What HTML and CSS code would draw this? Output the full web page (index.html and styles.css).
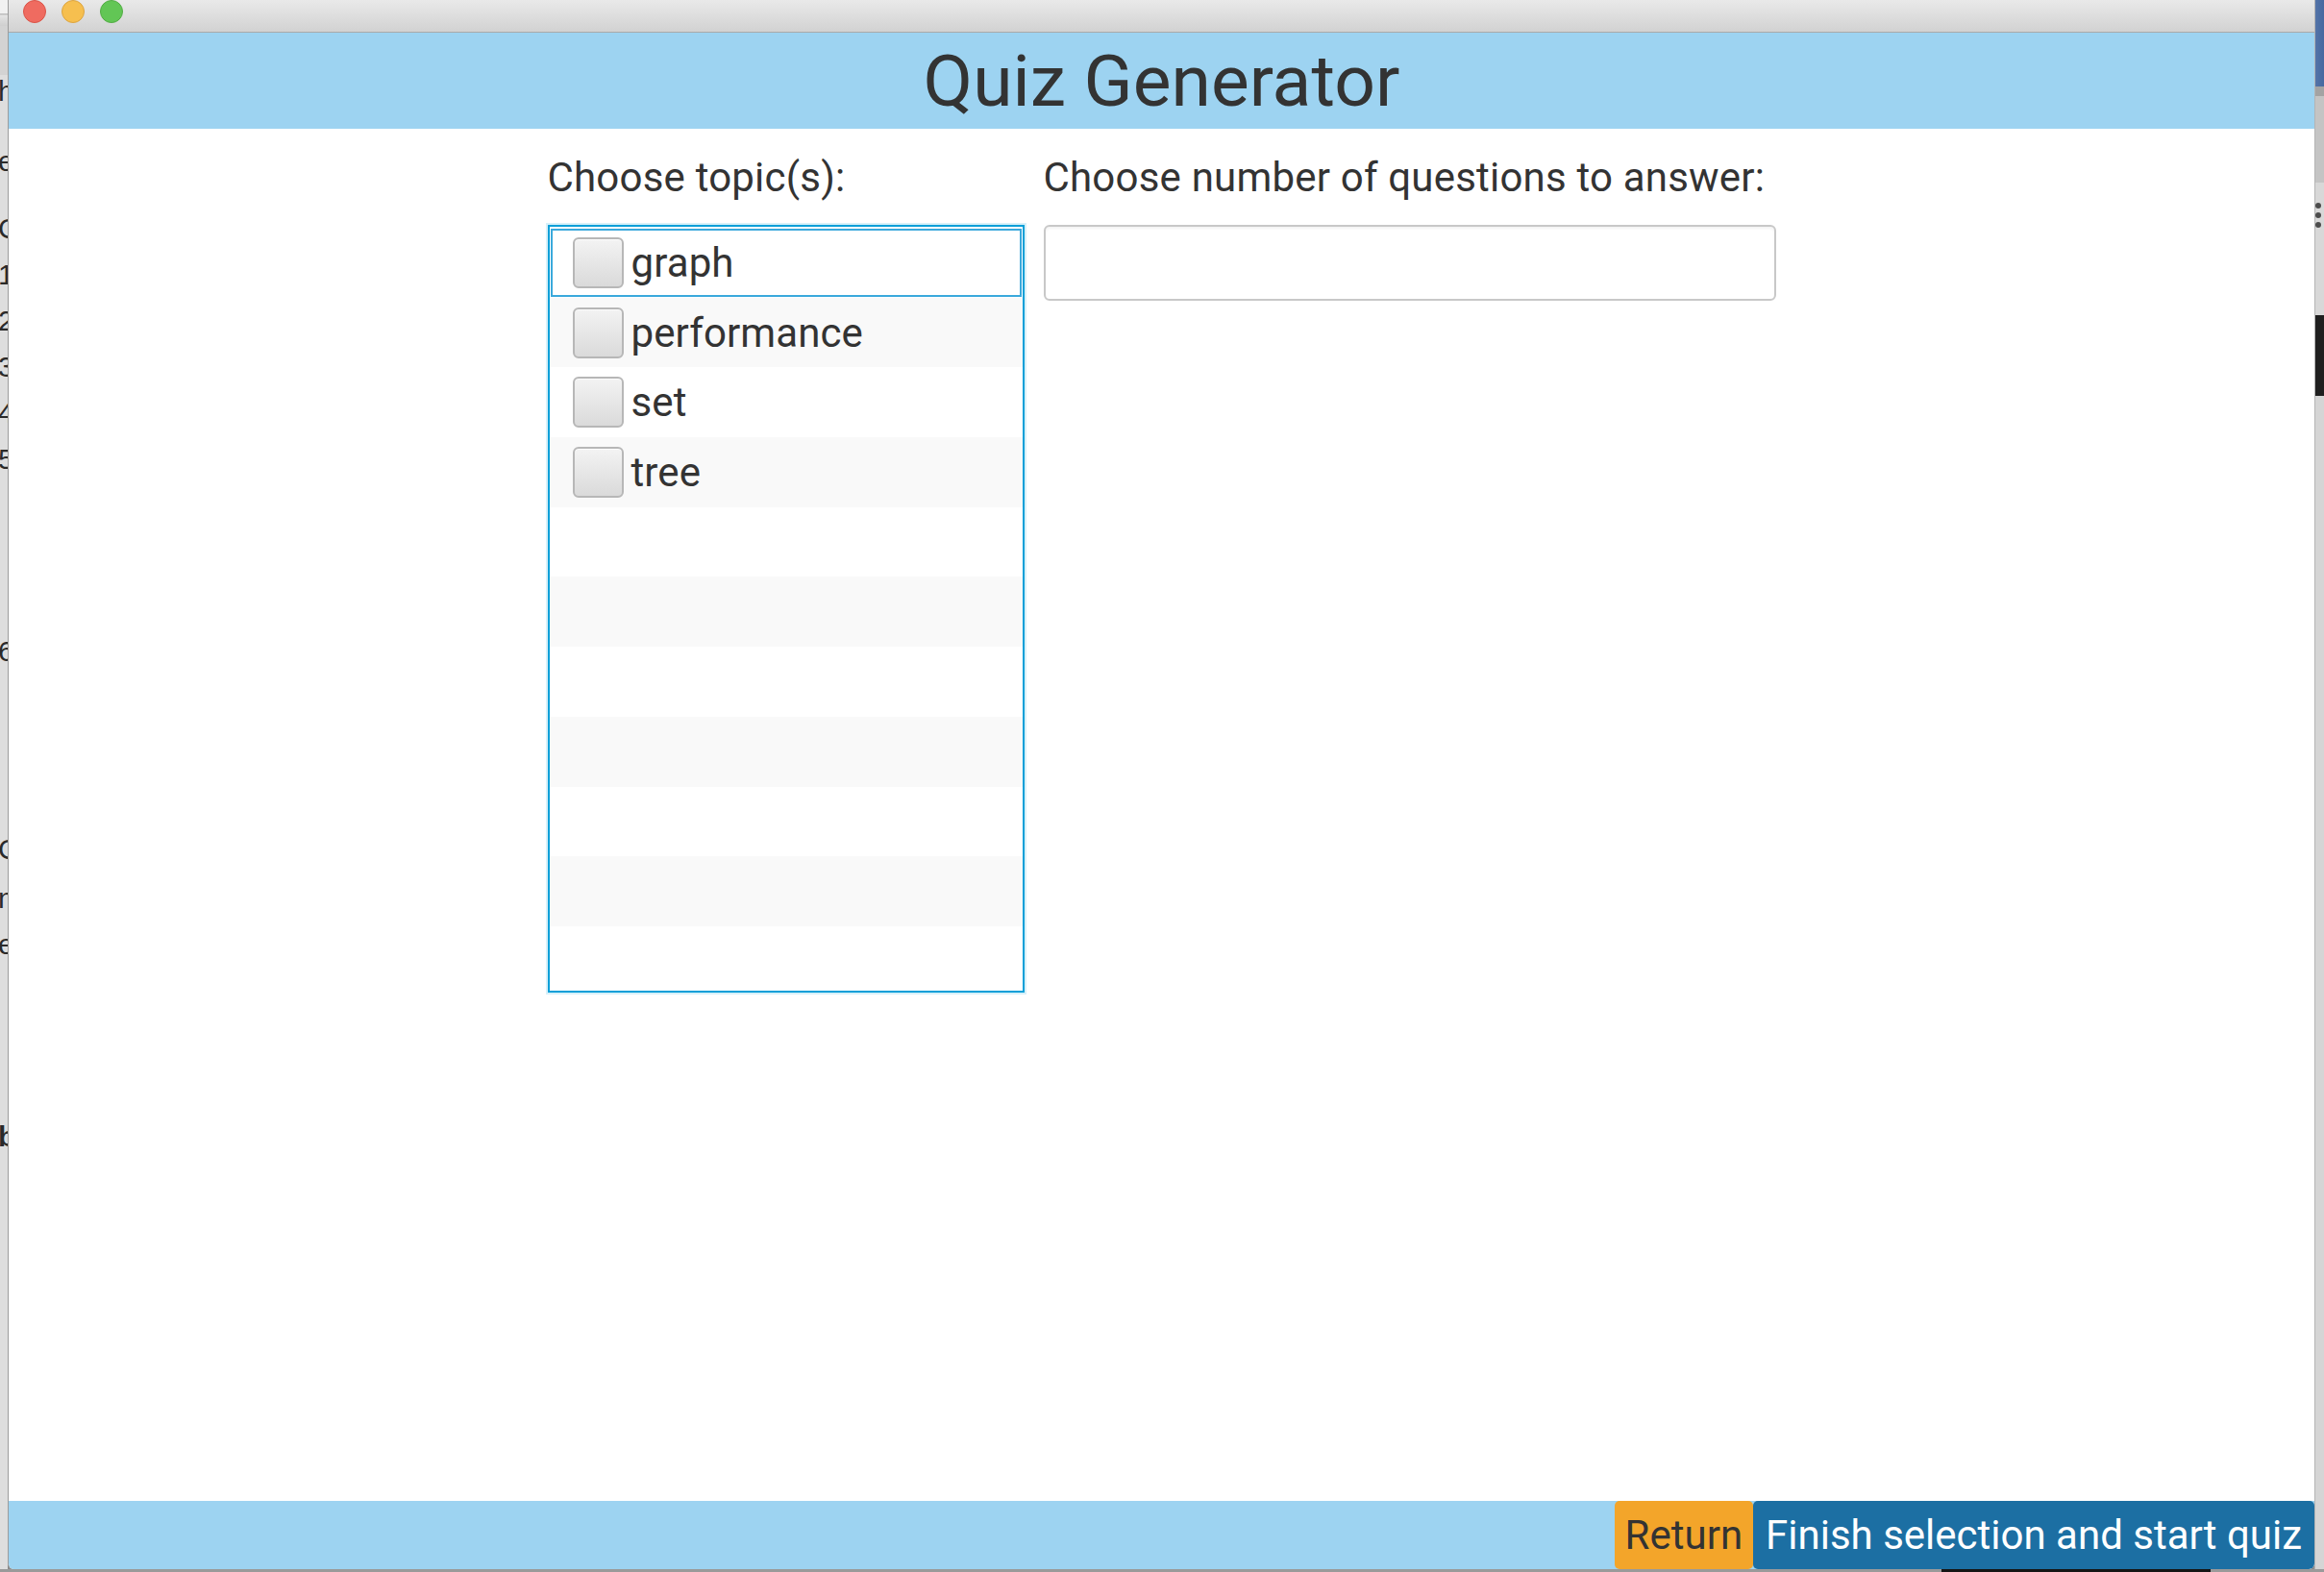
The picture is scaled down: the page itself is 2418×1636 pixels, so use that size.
FILE: index.html
```html
<!DOCTYPE html>
<html lang="en">
<head>
<meta charset="utf-8">
<title>Quiz Generator</title>
<link rel="stylesheet" href="styles.css">
</head>
<body>
<div class="screen">
  <div class="desk-row">
    <div class="desk-left">
      <div class="doc">
        <p class="ln g-h">h</p>
        <p class="ln g-e">e</p>
        <p class="ln g-c">C</p>
        <p class="ln">1</p>
        <p class="ln">2</p>
        <p class="ln">3</p>
        <p class="ln">4</p>
        <p class="ln">5</p>
        <p class="ln g-big">6</p>
        <p class="ln g-c2">C</p>
        <p class="ln g-n">n</p>
        <p class="ln">e</p>
        <p class="ln g-big bold">b.</p>
      </div>
    </div>

    <div class="window">
      <div class="titlebar">
        <span class="light red"></span>
        <span class="light yellow"></span>
        <span class="light green"></span>
      </div>

      <header class="app-header">
        <h1 class="app-title">Quiz Generator</h1>
      </header>

      <main class="content">
        <div class="form-grid">
          <div class="field-label">Choose topic(s):</div>
          <div class="field-label">Choose number of questions to answer:</div>

          <ul class="topic-list">
            <li class="topic focused"><span class="check"></span><span class="topic-name">graph</span></li>
            <li class="topic"><span class="check"></span><span class="topic-name">performance</span></li>
            <li class="topic"><span class="check"></span><span class="topic-name">set</span></li>
            <li class="topic"><span class="check"></span><span class="topic-name">tree</span></li>
          </ul>

          <input class="count-input" type="text" aria-label="Number of questions">
        </div>
      </main>

      <footer class="app-footer">
        <button class="btn btn-return">Return</button>
        <button class="btn btn-start">Finish selection and start quiz</button>
      </footer>
    </div>

    <div class="desk-right">
      <div class="r-blue"></div>
      <div class="r-line"></div>
      <div class="r-mid"></div>
      <div class="r-light">
        <span class="dot"></span>
        <span class="dot"></span>
        <span class="dot"></span>
      </div>
      <div class="r-black"></div>
      <div class="r-rest"></div>
    </div>
  </div>
  <div class="desk-bottom">
    <span class="b-gray"></span>
    <span class="b-black"></span>
    <span class="b-gray2"></span>
  </div>
</div>
</body>
</html>
```

FILE: styles.css
```css
* {
  box-sizing: border-box;
}

html,
body {
  margin: 0;
  padding: 0;
}

body {
  width: 2418px;
  height: 1636px;
  overflow: hidden;
  background: #8a8a8a;
  font-family: Roboto, "Liberation Sans", sans-serif;
  color: #333;
}

.screen {
  display: flex;
  flex-direction: column;
  width: 2418px;
  height: 1636px;
}

.desk-row {
  display: flex;
  height: 1633px;
  flex: none;
}

/* ---------- desktop behind (left) ---------- */
.desk-left {
  width: 8px;
  flex: none;
  overflow: hidden;
  background: linear-gradient(to bottom,
      #f1f1f1 0, #f1f1f1 14px,
      #bdbdbd 14px, #bdbdbd 15px,
      #e4e4e4 16px, #cfcfcf 27px,
      #d3d3d3 27px, #d3d3d3 78px,
      #dedede 78px, #dedede 100%);
}

.doc {
  margin-left: -2px;
  width: 60px;
}

.ln {
  margin: 0;
  font-family: "Liberation Sans", sans-serif;
  font-size: 30px;
  line-height: 48px;
  color: #2a2a2a;
}

.g-h { margin-top: 71px; }
.g-e { margin-top: 25px; }
.g-c { margin-top: 22px; }
.g-big { margin-top: 152px; }
.g-c2 { margin-top: 158px; }
.g-n { margin-top: 3px; }
.bold { font-weight: 700; }

/* ---------- window ---------- */
.window {
  width: 2400px;
  flex: none;
  display: flex;
  flex-direction: column;
  background: #fff;
  border-left: 1px solid #9c9c9c;
  border-radius: 0 0 6px 6px;
  overflow: hidden;
}

.titlebar {
  height: 34px;
  flex: none;
  display: flex;
  align-items: flex-start;
  gap: 16px;
  padding-left: 15px;
  background: linear-gradient(to bottom, #e9e9e9, #d2d2d2);
  border-bottom: 1px solid #a9a9a9;
}

.light {
  width: 24px;
  height: 24px;
  border-radius: 50%;
  flex: none;
}

.red {
  background: #ef6b60;
  border: 1px solid #da5448;
}

.yellow {
  background: #f6bf4f;
  border: 1px solid #dca440;
}

.green {
  background: #62c655;
  border: 1px solid #52ac44;
}

.app-header {
  height: 100px;
  flex: none;
  background: #9dd3f1;
  display: flex;
  align-items: center;
  justify-content: center;
}

.app-title {
  margin: 0;
  font-size: 75px;
  font-weight: 400;
  line-height: 75px;
  color: #333;
}

.content {
  flex: 1;
  padding-top: 26px;
}

.form-grid {
  display: grid;
  grid-template-columns: 496px 762px;
  column-gap: 20px;
  row-gap: 24px;
  justify-content: center;
  align-items: start;
}

.field-label {
  font-size: 42px;
  line-height: 50px;
  letter-spacing: 0.2px;
  color: #333;
}

.topic-list {
  margin: 0;
  padding: 1px 0;
  list-style: none;
  height: 799px;
  border: 2px solid #089fd8;
  box-shadow: 0 0 0 2px rgba(8, 159, 216, 0.16);
  background: repeating-linear-gradient(to bottom,
      #ffffff 0, #ffffff 72.7px,
      #f9f9f9 72.7px, #f9f9f9 145.4px);
  background-origin: content-box;
  background-clip: content-box;
  overflow: hidden;
}

.topic {
  height: 72.7px;
  display: flex;
  align-items: center;
  gap: 8px;
  padding-left: 24px;
  font-size: 42px;
  letter-spacing: 0.1px;
  color: #333;
}

.topic.focused {
  outline: 2px solid #3aa9dc;
  outline-offset: -3px;
}

.check {
  width: 53px;
  height: 53px;
  flex: none;
  border: 2px solid #b7b7b7;
  border-radius: 6px;
  background: linear-gradient(to bottom, #f3f3f3, #dadada);
  box-shadow: inset 0 1px 0 rgba(255, 255, 255, 0.7);
}

.count-input {
  width: 762px;
  height: 79px;
  margin: 0;
  border: 2px solid #c8c8c8;
  border-radius: 6px;
  background: #fff;
  box-shadow: inset 0 2px 3px rgba(0, 0, 0, 0.05);
  font-family: Roboto, "Liberation Sans", sans-serif;
  font-size: 42px;
  padding: 0 14px;
  outline: none;
}

.app-footer {
  height: 71px;
  flex: none;
  background: #9dd3f1;
  display: flex;
  justify-content: flex-end;
  align-items: stretch;
}

.btn {
  margin: 0;
  border: 0;
  border-radius: 5px;
  font-family: Roboto, "Liberation Sans", sans-serif;
  font-size: 42px;
  line-height: 1;
  padding: 0 11px;
}

.btn-return {
  background: #f3a52a;
  color: #333;
}

.btn-start {
  background: #1c6fa3;
  color: #fff;
  padding: 0 13px;
}

/* ---------- desktop behind (right) ---------- */
.desk-right {
  width: 10px;
  flex: none;
  display: flex;
  flex-direction: column;
  background: #d6d6d6;
  border-left: 1px solid #b4b4b4;
}

.r-blue {
  height: 90px;
  background: linear-gradient(to right, #5474a8, #4568a0);
}

.r-line {
  height: 10px;
  background: #a3a3a3;
}

.r-mid {
  height: 90px;
  background: #c4c4c4;
}

.r-light {
  height: 138px;
  background: #d8d8d8;
  display: flex;
  flex-direction: column;
  gap: 4px;
  padding-top: 21px;
}

.dot {
  width: 6px;
  height: 6px;
  border-radius: 50%;
  background: #4c4c4c;
}

.r-black {
  height: 84px;
  background: #1f1f1f;
}

.r-rest {
  flex: 1;
  background: #d5d5d5;
}

.desk-bottom {
  height: 3px;
  flex: none;
  display: flex;
}

.b-gray {
  width: 2020px;
  background: #9a9a9a;
}

.b-black {
  width: 280px;
  background: #151515;
}

.b-gray2 {
  flex: 1;
  background: #9a9a9a;
}
```
